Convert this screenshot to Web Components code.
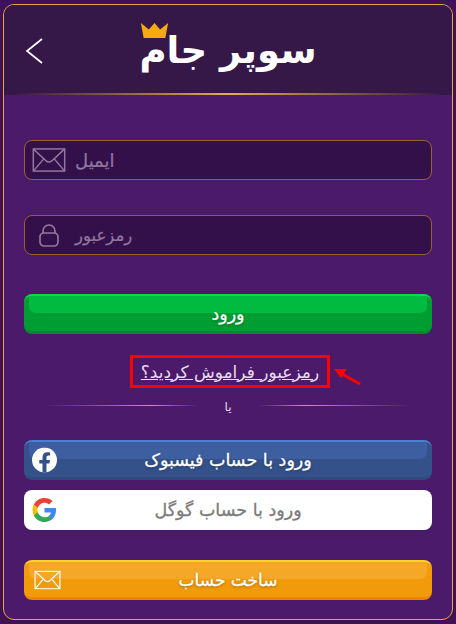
<!DOCTYPE html>
<html lang="fa">
<head>
<meta charset="utf-8">
<title>سوپر جام</title>
<style>
  html, body { margin: 0; padding: 0; }
  body { width: 456px; height: 624px; overflow: hidden; background: #3f1159; font-family: "DejaVu Sans", sans-serif; }
</style>
</head>
<body>
<template id="icon-mail">
  <svg viewBox="0 0 36 26" fill="none" stroke="currentColor" stroke-width="1.6"><rect x="1" y="1" width="34" height="24"/><path d="M1.500 1.500 15 14q3 2.400 6 0L34.500 1.500M1.500 24.500 12.500 11.500M34.500 24.500 23.500 11.500"/></svg>
</template>

<login-card>
  <top-bar slot="head">سوپر جام</top-bar>
  <text-field kind="mail" style="margin-top:45px;font-size:18px">ایمیل</text-field>
  <text-field kind="lock" style="margin-top:35px;font-size:16.500px">رمزعبور</text-field>
  <game-button tone="green" style="margin-top:39px">ورود</game-button>
  <forgot-link style="margin-top:21px">رمزعبور فراموش کردید؟</forgot-link>
  <or-line style="margin-top:9px">یا</or-line>
  <game-button tone="blue" icon="facebook" style="margin-top:21px">ورود با حساب فیسبوک</game-button>
  <game-button tone="white" icon="google" style="margin-top:10px">ورود با حساب گوگل</game-button>
  <game-button tone="orange" icon="mail" style="margin-top:30px;font-size:17px">ساخت حساب</game-button>
</login-card>

<script>
const mailSvg = document.getElementById('icon-mail').innerHTML;

class LoginCard extends HTMLElement {
  constructor() {
    super();
    this.attachShadow({mode: 'open'}).innerHTML = `
      <style>
        :host { display: block; box-sizing: border-box; width: 450px; height: 616px; margin: 4px 3px; border: 1px solid #f0a338; border-radius: 11px; background: #4c1a6a; overflow: hidden; }
        .body { padding: 0 20px; display: flex; flex-direction: column; }
      </style>
      <slot name="head"></slot>
      <div class="body"><slot></slot></div>`;
  }
}

class TopBar extends HTMLElement {
  constructor() {
    super();
    this.attachShadow({mode: 'open'}).innerHTML = `
      <style>
        :host { display: block; height: 90px; background: #361848; position: relative; }
        .row { height: 88px; display: flex; align-items: center; justify-content: center; }
        .title { color: #fff; font-size: 37px; font-weight: 700; line-height: 1; margin-top: 2px; position: relative; }
        .crown { position: absolute; left: 1px; top: -9px; width: 29px; height: 16px; }
        .back { position: absolute; left: 20px; top: 32px; width: 20px; height: 28px; }
        .gold { position: absolute; left: 0; right: 0; bottom: 0; height: 2px; background: linear-gradient(90deg, transparent 2%, #e0b040 50%, transparent 98%); }
      </style>
      <svg class="back" viewBox="0 0 20 28" fill="none" stroke="#fff" stroke-width="1.7"><path d="M18 2 3 14l15 12"/></svg>
      <div class="row"><div class="title"><svg class="crown" viewBox="0 0 29 17"><path fill="#f5aa12" d="M0 0 8.500 7 14.500 0 20.500 7 29 0 26 16H3z"/></svg><slot></slot></div></div>
      <div class="gold"></div>`;
  }
}

class TextField extends HTMLElement {
  constructor() {
    super();
    const lock = `<svg viewBox="0 0 20 23" fill="none" stroke="currentColor" stroke-width="1.7"><rect x="1" y="9" width="18" height="13" rx="4"/><path d="M4 9V7a6 6 0 0 1 12 0v2"/></svg>`;
    const kind = this.getAttribute('kind');
    this.attachShadow({mode: 'open'}).innerHTML = `
      <style>
        :host { display: block; box-sizing: border-box; height: 40px; border: 1px solid #96602f; border-radius: 8px; background: #34104b; color: #90789f; }
        .row { height: 100%; display: flex; align-items: center; }
        .ico { width: 36px; margin-left: 6px; display: flex; justify-content: center; }
        .ico svg { display: block; width: ${kind === 'mail' ? 34 : 20}px; height: ${kind === 'mail' ? 24 : 23}px; }
        .txt { margin-left: 8px; -webkit-text-stroke: .2px currentColor; }
      </style>
      <div class="row"><span class="ico">${kind === 'mail' ? mailSvg : lock}</span><span class="txt"><slot></slot></span></div>`;
  }
}

class GameButton extends HTMLElement {
  constructor() {
    super();
    const tones = {
      green: ['#00e03c', '#00bb40', '#009d33', '#008a2d'],
      blue: ['#4b7fd0', '#3e5f9f', '#345289', '#2f4a7e'],
      orange: ['#ffd02e', '#f5a827', '#f29b0a', '#ef8200']
    };
    const tone = this.getAttribute('tone');
    const t = tones[tone];
    const icons = {
      facebook: `<svg viewBox="0 0 25 25" width="25" height="25"><circle cx="12.500" cy="12.500" r="12.500" fill="#fff"/><path fill="#345289" d="M10.500 25V16H7.300v-3.600h3.200V9.700c0-3.200 1.900-4.900 4.800-4.900 1.400 0 2.800.2 2.800.2v3.100h-1.600c-1.500 0-2 1-2 2v2.300h3.500l-.6 3.600h-2.900v9z"/></svg>`,
      google: `<svg viewBox="0 0 48 48" width="25" height="25"><path fill="#4285f4" d="M46.100 24.500c0-1.600-.1-3.100-.4-4.500H24v8.700h12.400c-.5 2.900-2.200 5.300-4.600 6.900v5.700h7.400c4.300-4 6.900-9.900 6.900-16.800z"/><path fill="#34a853" d="M24 47c6.200 0 11.400-2 15.200-5.500l-7.400-5.700c-2 1.400-4.700 2.200-7.800 2.200-6 0-11-4-12.800-9.500H3.600v5.900C7.400 42 15.100 47 24 47z"/><path fill="#fbbc05" d="M11.200 28.500c-.5-1.400-.7-2.900-.7-4.500s.3-3.100.7-4.500v-5.900H3.600C2 16.700 1 20.200 1 24s1 7.300 2.600 10.400z"/><path fill="#ea4335" d="M24 10c3.400 0 6.400 1.200 8.800 3.400l6.500-6.500C35.400 3.300 30.200 1 24 1 15.100 1 7.400 6 3.600 13.600l7.600 5.900C13 14 18 10 24 10z"/></svg>`,
      mail: `<span style="display:block;width:27px;height:19px">${mailSvg}</span>`
    };
    const iconName = this.getAttribute('icon');
    const icon = icons[iconName] || '';
    const isWhite = tone === 'white';
    this.attachShadow({mode: 'open'}).innerHTML = `
      <style>
        :host { display: block; box-sizing: border-box; height: 40px; border-radius: 8px; position: relative; overflow: hidden; font-size: 17.500px; color: ${isWhite ? '#7b7b7b' : '#fff'}; background: ${isWhite ? '#fff' : t[2]}; ${isWhite ? '' : `border-top: 2px solid ${t[0]}; border-bottom: 3px solid ${t[3]};`} }
        .shine { position: absolute; left: 5px; right: 5px; top: 0; height: 17px; border-radius: 0 0 7px 7px; background: ${isWhite ? 'transparent' : t[1]}; }
        .label { position: relative; height: 100%; display: flex; align-items: center; justify-content: center; -webkit-text-stroke: .3px currentColor; text-shadow: ${isWhite ? 'none' : '0 1px 3px rgba(0,0,0,.35)'}; }
        .ico { position: absolute; left: ${iconName === 'mail' ? 10 : 8}px; top: 50%; transform: translateY(-50%); color: #fff; line-height: 0; }
        .ico svg { display: block; }
        .ico span svg { width: 27px; height: 19px; }
      </style>
      <div class="shine"></div>
      <span class="ico">${icon}</span>
      <div class="label"><slot></slot></div>`;
  }
}

class ForgotLink extends HTMLElement {
  constructor() {
    super();
    this.attachShadow({mode: 'open'}).innerHTML = `
      <style>
        :host { display: block; height: 33px; position: relative; }
        .box { box-sizing: border-box; width: 200px; height: 33px; margin: 0 0 0 106px; border: 3px solid #f00; display: flex; align-items: center; justify-content: center; color: #e6dcec; font-size: 17px; text-decoration: underline; white-space: nowrap; }
        .arrow { position: absolute; left: 310px; top: 13px; width: 28px; height: 18px; }
      </style>
      <div class="box"><slot></slot></div>
      <svg class="arrow" viewBox="0 0 28 18"><path fill="none" stroke="#f00" stroke-width="3" d="M26 16 8 6"/><path fill="#f00" d="M0 1 13 1 7 10z"/></svg>`;
  }
}

class OrLine extends HTMLElement {
  constructor() {
    super();
    this.attachShadow({mode: 'open'}).innerHTML = `
      <style>
        :host { display: flex; align-items: flex-start; justify-content: center; height: 22px; color: #e6dcec; font-size: 12px; padding: 0 21px; }
        i { flex: 1; height: 1px; margin-top: 8px; background: linear-gradient(90deg, transparent, #d8a340 70%, transparent); }
        i:last-child { background: linear-gradient(90deg, transparent, #d8a340 30%, transparent); }
        span { width: 60px; text-align: center; margin-top: 3px; }
      </style>
      <i></i><span><slot></slot></span><i></i>`;
  }
}

customElements.define('login-card', LoginCard);
customElements.define('top-bar', TopBar);
customElements.define('text-field', TextField);
customElements.define('game-button', GameButton);
customElements.define('forgot-link', ForgotLink);
customElements.define('or-line', OrLine);
</script>
</body>
</html>
